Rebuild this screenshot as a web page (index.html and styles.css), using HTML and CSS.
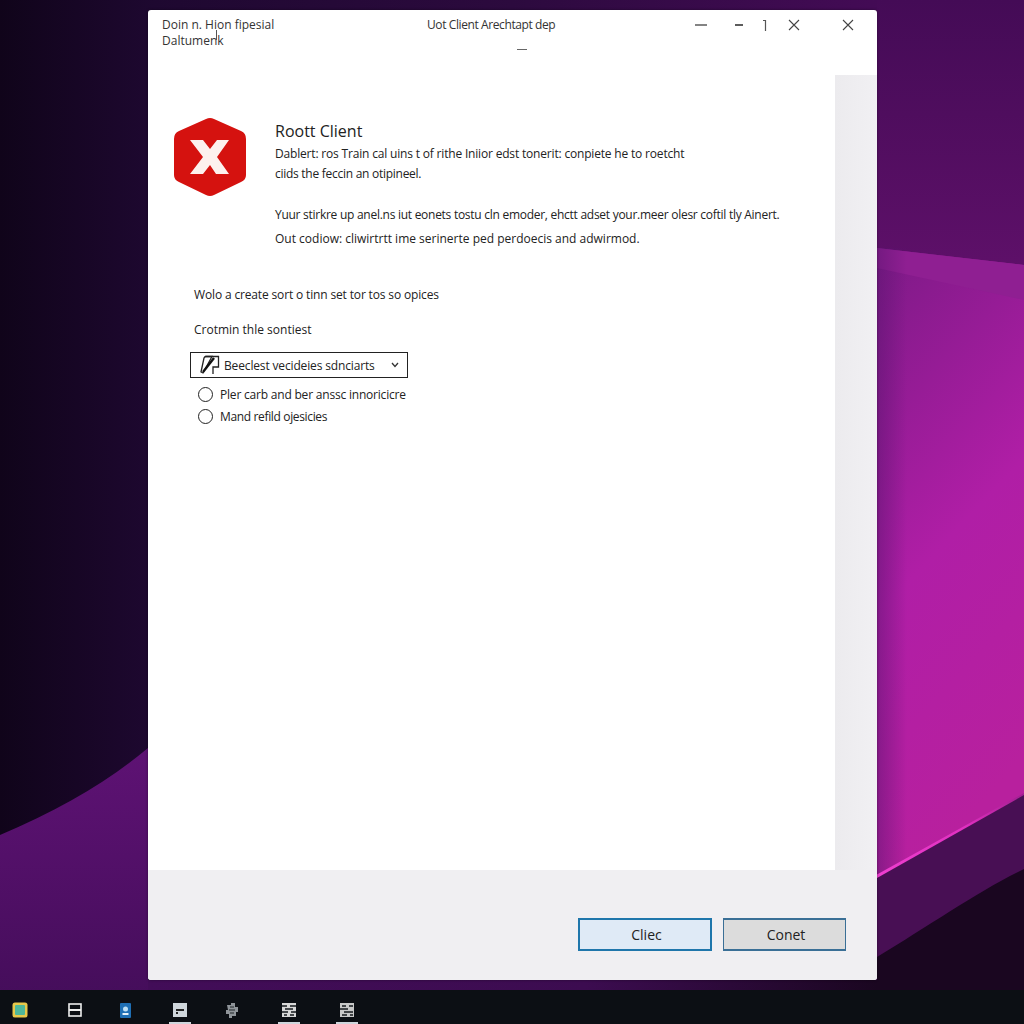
FILE: index.html
```html
<!DOCTYPE html>
<html lang="en">
<head>
  <meta charset="UTF-8">
  <title>Root Client</title>
  <link rel="stylesheet" href="styles.css">
</head>
<body>
<div class="desktop">
  <svg class="wallpaper" width="1024" height="1024" viewBox="0 0 1024 1024">
    <defs>
      <linearGradient id="base" x1="0" y1="0" x2="1" y2="0">
        <stop offset="0" stop-color="#10041a"/>
        <stop offset="0.15" stop-color="#1e0830"/>
        <stop offset="0.5" stop-color="#2c0a3e"/>
        <stop offset="0.85" stop-color="#430b55"/>
        <stop offset="1" stop-color="#4a0c5a"/>
      </linearGradient>
      <linearGradient id="upper" x1="0" y1="0" x2="0" y2="1">
        <stop offset="0" stop-color="#440b56"/>
        <stop offset="1" stop-color="#5e1069"/>
      </linearGradient>
      <linearGradient id="wave" x1="0" y1="0" x2="0.25" y2="1">
        <stop offset="0" stop-color="#7c1a86"/>
        <stop offset="0.55" stop-color="#b01ea6"/>
        <stop offset="1" stop-color="#b8209e"/>
      </linearGradient>
      <linearGradient id="waveEdge" x1="0" y1="0" x2="1" y2="0">
        <stop offset="0" stop-color="#5a1470" stop-opacity="0.5"/>
        <stop offset="1" stop-color="#5a1470" stop-opacity="0"/>
      </linearGradient>
      <linearGradient id="left" x1="0" y1="0" x2="0" y2="1">
        <stop offset="0" stop-color="#5e1274"/>
        <stop offset="1" stop-color="#420d58"/>
      </linearGradient>
      <linearGradient id="strip" x1="0" y1="0" x2="1" y2="0">
        <stop offset="0" stop-color="#420d58"/>
        <stop offset="0.6" stop-color="#3c0c50"/>
        <stop offset="1" stop-color="#1a0620"/>
      </linearGradient>
      <linearGradient id="glow" x1="0" y1="1" x2="1" y2="0">
        <stop offset="0" stop-color="#ee3fd0"/>
        <stop offset="0.6" stop-color="#e030c0"/>
        <stop offset="1" stop-color="#a01e90"/>
      </linearGradient>
    </defs>
    <rect width="1024" height="1024" fill="url(#base)"/>
    <rect x="877" width="147" height="270" fill="url(#upper)"/>
    <path d="M877 248L1024 265V794L877 876Z" fill="url(#wave)"/>
    <path d="M877 248L1024 265V300L877 268Z" fill="#8f1f92"/>
    <rect x="877" y="248" width="30" height="630" fill="url(#waveEdge)"/>
    <path d="M877 876L1024 794V1024H877Z" fill="#480f54"/>
    <path d="M877 957C930 925 980 890 1024 869V1024H877Z" fill="#1a0620"/>
    <path d="M877 874.500L1024 793V795L877 878Z" fill="url(#glow)"/>
    <path d="M0 835C60 810 110 780 148 748V1024H0Z" fill="url(#left)"/>
    <rect x="148" y="980" width="729" height="12" fill="url(#strip)"/>
  </svg>

  <div class="window">
    <div class="title-bar">
      <div class="doc-name">Doin n. Hion fipesial<br>Daltumenk</div>
      <div class="app-name">Uot Client Arechtapt dep<span class="app-dash"></span></div>
      <div class="controls">
        <svg class="ctl ctl-a" width="12" height="12" viewBox="0 0 12 12"><path d="M0 6H12" stroke="#333" stroke-width="1.2"/></svg>
        <svg class="ctl ctl-b" width="10" height="12" viewBox="0 0 10 12"><path d="M1 6H9" stroke="#333" stroke-width="1.6"/></svg>
        <svg class="ctl ctl-c" width="6" height="12" viewBox="0 0 6 12"><path d="M1 1.500H3.500V12" fill="none" stroke="#555" stroke-width="1.200"/></svg>
        <svg class="ctl ctl-d" width="12" height="12" viewBox="0 0 12 12"><path d="M1 1L11 11M11 1L1 11" stroke="#444" stroke-width="1.100"/></svg>
        <svg class="ctl ctl-e" width="12" height="12" viewBox="0 0 12 12"><path d="M1 1L11 11M11 1L1 11" stroke="#444" stroke-width="1.100"/></svg>
      </div>
    </div>

    <div class="middle">
      <div class="content">
        <div class="message">
          <svg class="error-icon" width="74" height="80" viewBox="0 0 74 80">
            <path d="M33 2Q37 0 41 2L68 14Q73 16 73 22V58Q73 63 68 65L41 78Q37 80 33 78L6 65Q1 63 1 58V22Q1 16 6 14Z" fill="#d5120f"/>
            <path d="M17 23H30L37 32L44 23H56L44 40L56 57H43L37 48L30 57H17L30 40Z" fill="#fdf1ee"/>
          </svg>
          <div class="message-text">
            <h1>Roott Client</h1>
            <p class="line-first">Dablert: ros Train cal uins t of rithe Iniior edst tonerit: conpiete he to roetcht</p>
            <p class="line-second">ciids the feccin an otipineel.</p>
            <p class="line-third">Yuur stirkre up anel.ns iut eonets tostu cln emoder, ehctt adset your.meer olesr coftil tly Ainert.</p>
            <p class="line-fourth">Out codiow: cliwirtrtt ime serinerte ped perdoecis and adwirmod.</p>
          </div>
        </div>

        <div class="options">
          <p class="options-lead">Wolo a create sort o tinn set tor tos so opices</p>
          <p class="options-sub">Crotmin thle sontiest</p>
          <div class="select">
            <svg width="20" height="20" viewBox="0 0 20 20"><path d="M5 1.500H18.500V12H13V19" fill="none" stroke="#222" stroke-width="1.300"/><path d="M1 17L4 3Q4.500 1.500 6 1.500H12L3 18Z" fill="none" stroke="#222" stroke-width="1.300"/><path d="M3 17L14 3" stroke="#111" stroke-width="2.400"/></svg>
            <span class="select-label">Beeclest vecideies sdnciarts</span>
            <svg class="chevron" width="8" height="6" viewBox="0 0 8 6"><path d="M1 1L4 4.500L7 1" fill="none" stroke="#333" stroke-width="1.300"/></svg>
          </div>
          <label class="radio radio-first"><span class="dot"></span>Pler carb and ber anssc innoricicre</label>
          <label class="radio radio-second"><span class="dot"></span>Mand refild ojesicies</label>
        </div>
      </div>
      <div class="side"></div>
    </div>

    <div class="footer">
      <button class="btn btn-primary">Cliec</button>
      <button class="btn btn-second">Conet</button>
    </div>
  </div>

  <div class="taskbar">
    <span class="task"><svg width="16" height="16" viewBox="0 0 16 16"><rect x="0.500" y="0.500" width="15" height="15" rx="2.500" fill="#e8c84a"/><rect x="3" y="3" width="10" height="10" rx="1" fill="#4fb89a"/></svg></span>
    <span class="task"><svg width="14" height="14" viewBox="0 0 14 14"><rect x="1" y="1" width="12" height="12" fill="none" stroke="#eee" stroke-width="1.600"/><path d="M1 7H13" stroke="#eee" stroke-width="2"/></svg></span>
    <span class="task"><svg width="11" height="15" viewBox="0 0 11 15"><rect width="11" height="15" rx="1" fill="#1f6fb5"/><circle cx="5.500" cy="6" r="2.500" fill="#bfe0f5"/><rect x="2.500" y="10" width="6" height="2" fill="#e6f2fa"/></svg></span>
    <span class="task task-open"><svg width="14" height="14" viewBox="0 0 14 14"><rect width="14" height="14" fill="#cfd6dc"/><rect x="3" y="6" width="8" height="2" fill="#222"/><rect x="3" y="9" width="2" height="2" fill="#222"/></svg></span>
    <span class="task"><svg width="16" height="16" viewBox="0 0 16 16"><path d="M3 3H7V1H11V5H14V10H12V14H8V16H5V12H2V8H4Z" fill="#8f9499"/><path d="M6 5H10M5 8H11M6 11H10" stroke="#22262a" stroke-width="1.200"/></svg></span>
    <span class="task task-open"><svg width="14" height="14" viewBox="0 0 14 14"><rect width="14" height="14" fill="#d8d8d8"/><path d="M0 3H5M8 3H14M3 6H11M0 9H6M9 9H14M2 12H5M8 12H12" stroke="#15181c" stroke-width="1.400"/></svg></span>
    <span class="task task-open"><svg width="14" height="14" viewBox="0 0 14 14"><rect width="14" height="14" fill="#c8c8c8"/><path d="M2 3H6M9 3H13M0 6H8M4 9H13M2 12H7M10 12H13" stroke="#15181c" stroke-width="1.400"/></svg></span>
  </div>
</div>
</body>
</html>
```

FILE: styles.css
```css
html, body {
  margin: 0;
  padding: 0;
  background-color: #12061f;
  font-family: "Open Sans", "Noto Sans", sans-serif;
  color: #222;
}
.desktop {
  position: relative;
  width: 1024px;
  height: 1024px;
  overflow: hidden;
  display: flex;
  flex-direction: column;
}
.wallpaper {
  position: absolute;
  left: 0;
  top: 0;
}
.window {
  position: relative;
  width: 729px;
  height: 970px;
  margin: 10px 0 0 148px;
  background-color: #fff;
  border-radius: 3px;
  display: flex;
  flex-direction: column;
  box-shadow: 0 0 3px rgba(0, 0, 0, 0.4);
}
.title-bar {
  height: 65px;
  flex-shrink: 0;
  display: flex;
  font-size: 12px;
  color: #333;
}
.doc-name {
  position: relative;
  box-sizing: border-box;
  width: 279px;
  padding: 7px 0 0 14px;
  line-height: 16px;
}
/* stray cursor tick over the title */
.doc-name::after {
  content: "";
  position: absolute;
  left: 68px;
  top: 20px;
  width: 1px;
  height: 10px;
  background-color: #555;
}
.app-name {
  position: relative;
  width: 259px;
  padding-top: 7px;
  line-height: 16px;
  letter-spacing: -0.4px;
}
.app-dash {
  position: absolute;
  left: 90px;
  top: 39px;
  width: 10px;
  height: 1px;
  background-color: #666;
}
.controls {
  position: relative;
  flex: 1;
}
.ctl {
  position: absolute;
  top: 9px;
}
.ctl-a { left: 9px; }
.ctl-b { left: 48px; }
.ctl-c { left: 76px; }
.ctl-d { left: 102px; }
.ctl-e { left: 156px; }
.middle {
  height: 795px;
  flex-shrink: 0;
  display: flex;
}
.content {
  width: 687px;
  background-color: #fff;
}
.side {
  flex: 1;
  background-image: linear-gradient(90deg, #ecebee, #f1f0f3);
}
.message {
  display: flex;
  padding: 42px 0 0 25px;
}
.error-icon {
  flex-shrink: 0;
  margin-right: 28px;
}
.message-text {
  padding-top: 3px;
}
h1 {
  margin: 0;
  font-size: 16px;
  font-weight: 400;
  line-height: 22px;
  color: #222;
}
p {
  margin: 0;
  font-size: 12px;
  line-height: 18px;
  white-space: nowrap;
}
.line-first {
  margin-top: 3px;
  letter-spacing: -0.18px;
}
.line-second {
  margin-top: 2px;
  letter-spacing: -0.27px;
}
.line-third {
  margin-top: 23px;
  letter-spacing: -0.27px;
}
.line-fourth {
  margin-top: 6px;
}
.options {
  padding: 38px 0 0 42px;
}
.options-lead {
  margin-left: 4px;
  letter-spacing: -0.15px;
}
.options-sub {
  margin: 17px 0 0 4px;
}
.select {
  display: flex;
  align-items: center;
  width: 207px;
  height: 24px;
  margin-top: 13px;
  border: 1px solid #222;
  padding-left: 9px;
  font-size: 12px;
}
.select-label {
  margin-left: 4px;
  flex: 1;
  letter-spacing: -0.15px;
}
.chevron {
  margin-right: 8px;
}
.radio {
  display: flex;
  align-items: center;
  height: 22px;
  margin-left: 8px;
  font-size: 12px;
  white-space: nowrap;
}
.radio-first {
  margin-top: 5px;
  letter-spacing: -0.2px;
}
.radio-second {
  letter-spacing: -0.35px;
}
.dot {
  width: 13px;
  height: 13px;
  border: 1px solid #222;
  border-radius: 50%;
  margin-right: 7px;
}
.footer {
  flex: 1;
  background-color: #f0eff2;
  display: flex;
  justify-content: flex-end;
  align-items: flex-start;
  gap: 11px;
  padding: 48px 31px 0 0;
  border-radius: 0 0 3px 3px;
}
.btn {
  height: 33px;
  box-sizing: border-box;
  font-family: inherit;
  font-size: 14px;
  color: #222;
  border-radius: 0;
  padding: 0 0 0 3px;
}
.btn-primary {
  width: 134px;
  background-color: #dfeaf6;
  border: 2px solid #1f76ab;
}
.btn-second {
  width: 123px;
  background-color: #dcdcdc;
  border: 1px solid #3a6f96;
  border-width: 2px 1px;
}
.taskbar {
  position: relative;
  height: 34px;
  box-sizing: border-box;
  margin-top: 10px;
  background-color: #0c0f14;
  display: flex;
  align-items: center;
  padding: 6px 0 0 12px;
}
.task {
  position: relative;
  width: 16px;
  margin-right: 39px;
  display: flex;
  justify-content: center;
}
.task:nth-child(2) { margin-right: 34px; }
.task:nth-child(4) { margin-right: 36px; }
.task:nth-child(5) { margin-right: 41px; }
.task:nth-child(6) { margin-right: 42px; }
.task-open::after {
  content: "";
  position: absolute;
  left: -3px;
  right: -3px;
  bottom: -7px;
  height: 2px;
  background-color: #cfd6dc;
}
```
